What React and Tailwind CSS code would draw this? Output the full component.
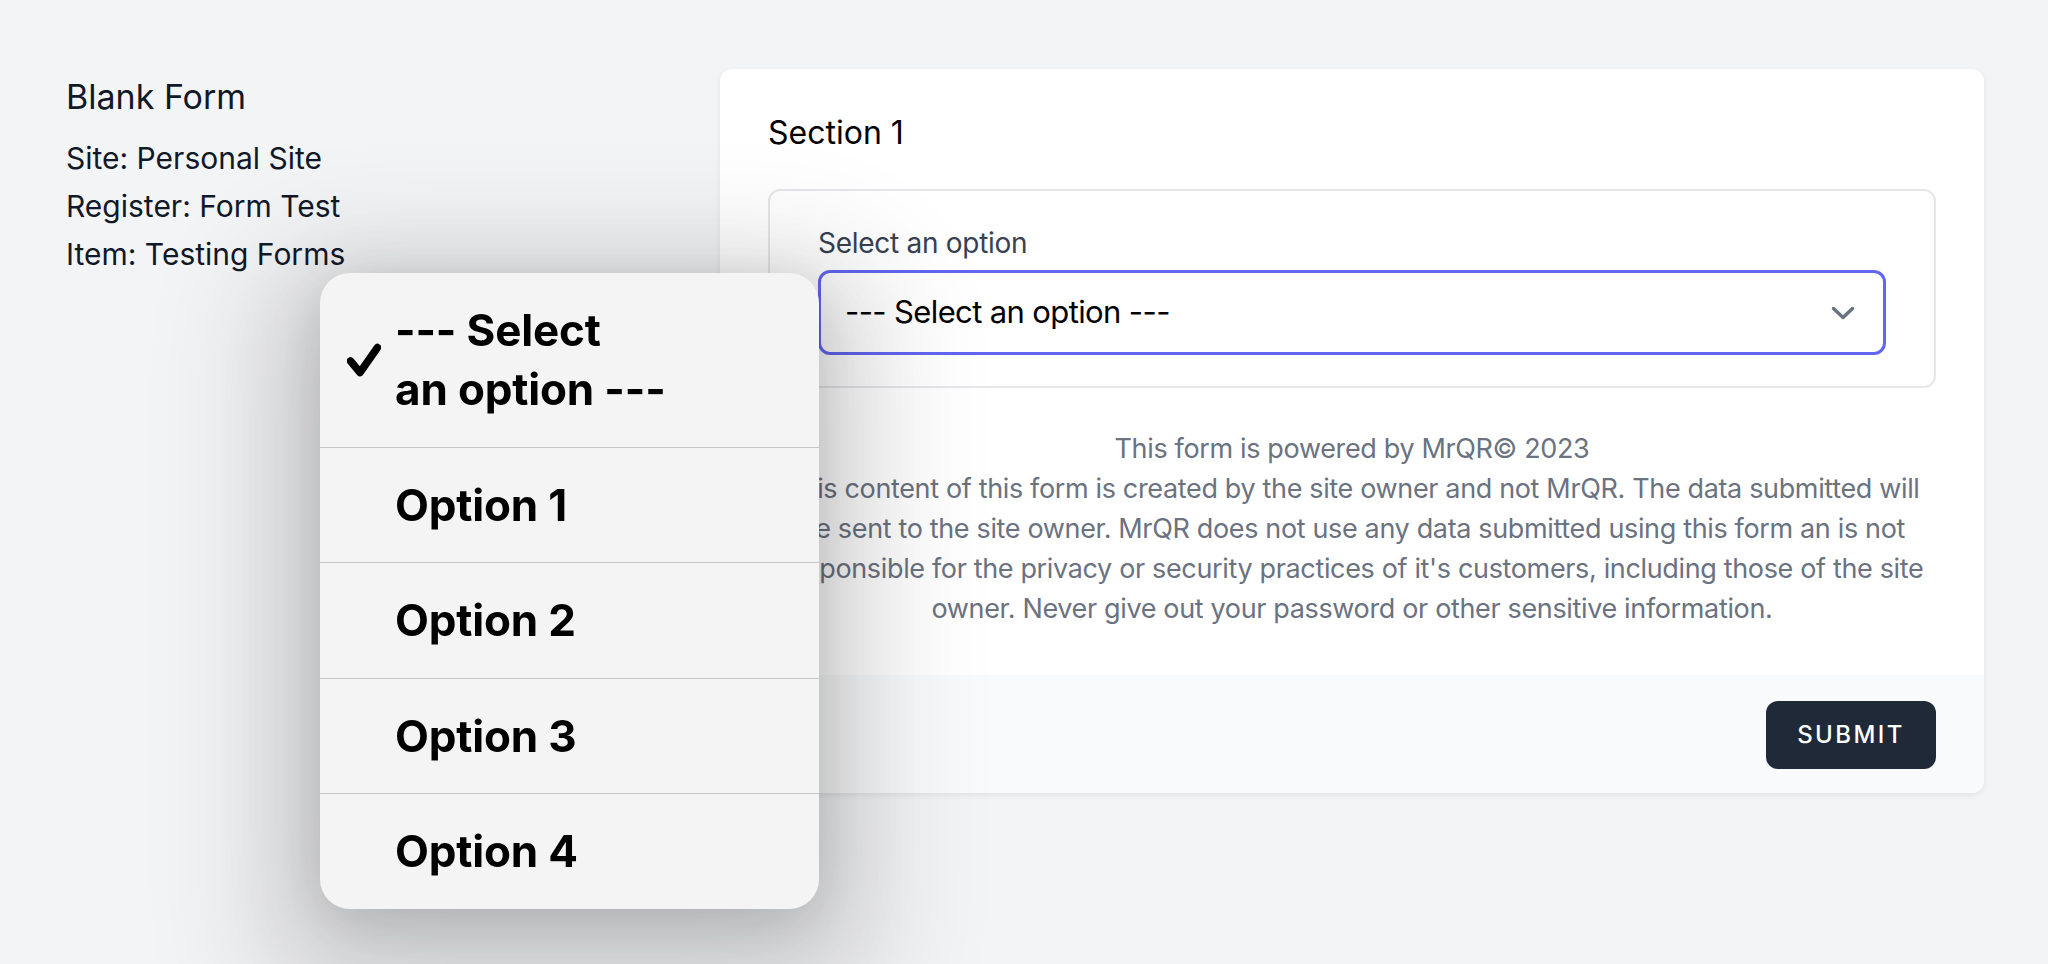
import React from 'react';

const options = ['Option 1', 'Option 2', 'Option 3', 'Option 4'];

const CheckMark = () => (
    <svg width="34" height="34" viewBox="0 0 34 34" fill="none">
        <path d="M3.5 18 L13 29.5 L30.5 4.5" stroke="#000" strokeWidth="7.5" strokeLinecap="round" strokeLinejoin="round" />
    </svg>
);

const Chevron = () => (
    <svg width="26" height="16" viewBox="0 0 26 16" fill="none">
        <path d="M3.5 3.5 L13 12.5 L22.5 3.5" stroke="#6b7280" strokeWidth="3.5" strokeLinecap="round" strokeLinejoin="round" />
    </svg>
);

// native iOS-style picker popover shown over the select
const Picker = () => (
    <div className="absolute left-[320px] top-[273px] w-[499px] transform-gpu overflow-hidden rounded-[30px] bg-[#f4f4f5] font-['Inter',sans-serif] font-bold tracking-[-0.01em] text-black shadow-[0_10px_50px_rgba(0,0,0,0.1),0_30px_110px_10px_rgba(0,0,0,0.15),0_40px_110px_80px_rgba(0,0,0,0.09)]">
        <div className="flex h-[173.5px] items-center pl-[27px]">
            <CheckMark />
            <span className="ml-[14px] text-[44px] leading-[59px]">
                --- Select
                <br />
                an option ---
            </span>
        </div>
        {options.map((o) => (
            <div key={o} className="flex h-[115.5px] items-center border-t border-[#c6c6c8] pl-[75px] text-[44px]">
                {o}
            </div>
        ))}
    </div>
);

export default function App() {
    return (
        <div className="relative min-h-screen overflow-hidden bg-[#f3f4f6] font-['Inter',sans-serif]">
            <div className="flex pl-[66px] pr-[64px] pt-[69px]">
                <div className="w-[654px] shrink-0 pt-[8px] text-[#111827]">
                    <h1 className="text-[34px] leading-[40px]">Blank Form</h1>
                    <div className="mt-[17px] text-[30px] leading-[48px]">
                        <p>Site: Personal Site</p>
                        <p>Register: Form Test</p>
                        <p>Item: Testing Forms</p>
                    </div>
                </div>

                <div className="flex-1 overflow-hidden rounded-[12px] bg-white shadow-[0_2px_6px_rgba(0,0,0,0.08)]">
                    <div className="px-12 pt-[44px] pb-[46px]">
                        <h2 className="text-[32px] leading-[40px] text-black">Section 1</h2>
                        <div className="mt-[36px] rounded-[12px] border-2 border-[#e5e7eb] px-12 pt-8 pb-[31px]">
                            <label className="block text-[28px] leading-[40px] tracking-[-0.01em] text-[#374151]">Select an option</label>
                            <div className="mt-[7px] flex h-[85px] items-center justify-between rounded-[12px] border-[3px] border-[#6366f1] pl-6 pr-[27px]">
                                <span className="text-[31px] tracking-[-0.02em] text-black">--- Select an option ---</span>
                                <Chevron />
                            </div>
                        </div>
                        <p className="mt-[41px] whitespace-nowrap text-center text-[27px] leading-[40px] tracking-[-0.013em] text-[#6b7280]">
                            This form is powered by MrQR© 2023
                            <br />
                            This content of this form is created by the site owner and not MrQR. The data submitted will
                            <br />
                            be sent to the site owner. MrQR does not use any data submitted using this form an is not
                            <br />
                            responsible for the privacy or security practices of it's customers, including those of the site
                            <br />
                            owner. Never give out your password or other sensitive information.
                        </p>
                    </div>
                    <div className="flex justify-end bg-[#f9fafb] px-12 pt-[26px] pb-[24px]">
                        <button className="h-[68px] w-[170px] rounded-[12px] bg-[#1f2937] text-[24px] font-medium tracking-[0.1em] text-white">
                            SUBMIT
                        </button>
                    </div>
                </div>
            </div>

            <Picker />
        </div>
    );
}
